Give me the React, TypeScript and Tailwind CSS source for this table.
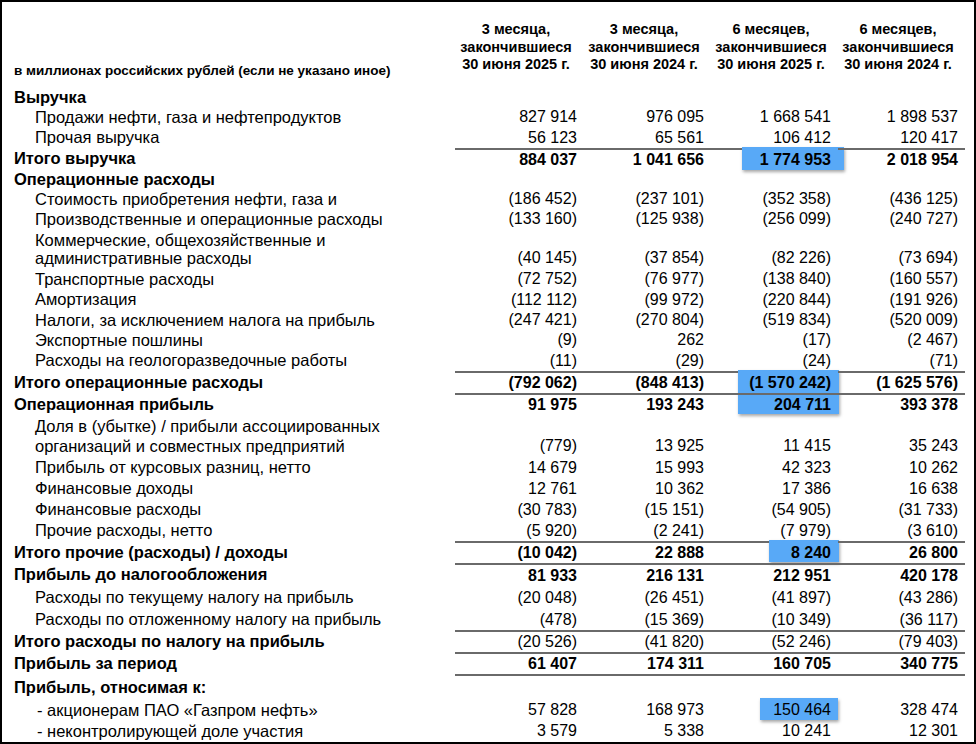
import React from "react";

interface Highlight {
  left: number;
  top: number;
  width: number;
  height: number;
}

interface Row {
  label: string[];
  values?: string[];
  kind: "head" | "item" | "total" | "boldLabel";
  h: number;
  line?: boolean;
  lead?: number;
  pad?: number;
  indent?: number;
  hl?: Highlight;
}

const rows: Row[] = [
  { label: ["Выручка"], kind: "head", h: 20 },
  { label: ["Продажи нефти, газа и нефтепродуктов"], values: ["827 914", "976 095", "1 668 541", "1 898 537"], kind: "item", h: 20 },
  { label: ["Прочая выручка"], values: ["56 123", "65 561", "106 412", "120 417"], kind: "item", h: 21 },
  {
    label: ["Итого выручка"], values: ["884 037", "1 041 656", "1 774 953", "2 018 954"], kind: "total", h: 21, line: true,
    hl: { left: 31, top: -1, width: 102, height: 23 },
  },
  { label: ["Операционные расходы"], kind: "head", h: 20 },
  { label: ["Стоимость приобретения нефти, газа и"], values: ["(186 452)", "(237 101)", "(352 358)", "(436 125)"], kind: "item", h: 20 },
  { label: ["Производственные и операционные расходы"], values: ["(133 160)", "(125 938)", "(256 099)", "(240 727)"], kind: "item", h: 20 },
  {
    label: ["Коммерческие, общехозяйственные и", "административные расходы"],
    values: ["(40 145)", "(37 854)", "(82 226)", "(73 694)"], kind: "item", h: 40, lead: 18, pad: 2,
  },
  { label: ["Транспортные расходы"], values: ["(72 752)", "(76 977)", "(138 840)", "(160 557)"], kind: "item", h: 20 },
  { label: ["Амортизация"], values: ["(112 112)", "(99 972)", "(220 844)", "(191 926)"], kind: "item", h: 21 },
  { label: ["Налоги, за исключением налога на прибыль"], values: ["(247 421)", "(270 804)", "(519 834)", "(520 009)"], kind: "item", h: 20 },
  { label: ["Экспортные пошлины"], values: ["(9)", "262", "(17)", "(2 467)"], kind: "item", h: 20 },
  { label: ["Расходы на геологоразведочные работы"], values: ["(11)", "(29)", "(24)", "(71)"], kind: "item", h: 21 },
  {
    label: ["Итого операционные расходы"], values: ["(792 062)", "(848 413)", "(1 570 242)", "(1 625 576)"], kind: "total", h: 22, line: true,
    hl: { left: 27, top: -1, width: 101, height: 44 },
  },
  { label: ["Операционная прибыль"], values: ["91 975", "193 243", "204 711", "393 378"], kind: "total", h: 22, line: true },
  {
    label: ["Доля в (убытке) / прибыли ассоциированных", "организаций и совместных предприятий"],
    values: ["(779)", "13 925", "11 415", "35 243"], kind: "item", h: 42, lead: 20, pad: 1,
  },
  { label: ["Прибыль от курсовых разниц, нетто"], values: ["14 679", "15 993", "42 323", "10 262"], kind: "item", h: 21 },
  { label: ["Финансовые доходы"], values: ["12 761", "10 362", "17 386", "16 638"], kind: "item", h: 21 },
  { label: ["Финансовые расходы"], values: ["(30 783)", "(15 151)", "(54 905)", "(31 733)"], kind: "item", h: 21 },
  { label: ["Прочие расходы, нетто"], values: ["(5 920)", "(2 241)", "(7 979)", "(3 610)"], kind: "item", h: 21 },
  {
    label: ["Итого прочие (расходы) / доходы"], values: ["(10 042)", "22 888", "8 240", "26 800"], kind: "total", h: 22, line: true,
    hl: { left: 58, top: -1, width: 70, height: 22 },
  },
  { label: ["Прибыль до налогообложения"], values: ["81 933", "216 131", "212 951", "420 178"], kind: "total", h: 23, line: true },
  { label: ["Расходы по текущему налогу на прибыль"], values: ["(20 048)", "(26 451)", "(41 897)", "(43 286)"], kind: "item", h: 23 },
  { label: ["Расходы по отложенному налогу на прибыль"], values: ["(478)", "(15 369)", "(10 349)", "(36 117)"], kind: "item", h: 21 },
  { label: ["Итого расходы по налогу на прибыль"], values: ["(20 526)", "(41 820)", "(52 246)", "(79 403)"], kind: "boldLabel", h: 22, line: true },
  { label: ["Прибыль за период"], values: ["61 407", "174 311", "160 705", "340 775"], kind: "total", h: 22, line: true },
  { label: ["Прибыль, относимая к:"], kind: "head", h: 26, line: true },
  {
    label: ["- акционерам ПАО «Газпром нефть»"], values: ["57 828", "168 973", "150 464", "328 474"], kind: "item", h: 20, indent: 35,
    hl: { left: 49, top: -2, width: 78, height: 22 },
  },
  { label: ["- неконтролирующей доле участия"], values: ["3 579", "5 338", "10 241", "12 301"], kind: "item", h: 22, indent: 35 },
];

const headers = [
  ["3 месяца,", "закончившиеся", "30 июня 2025 г."],
  ["3 месяца,", "закончившиеся", "30 июня 2024 г."],
  ["6 месяцев,", "закончившиеся", "30 июня 2025 г."],
  ["6 месяцев,", "закончившиеся", "30 июня 2024 г."],
];

const colWidths = ["w-[129px]", "w-[127px]", "w-[127px]", "w-[127px]"];

const ReportRow = ({ row }: { row: Row }) => {
  const boldLabel = row.kind !== "item";
  const boldNums = row.kind === "total";
  const lead = row.lead ?? row.h;
  const multi = row.label.length > 1;

  return (
    <div className="relative flex" style={{ height: row.h }}>
      <div
        className={`w-[453px] shrink-0 text-[16.5px] ${boldLabel ? "font-bold" : ""}`}
        style={{
          paddingLeft: row.indent ?? (row.kind === "item" ? 33 : 12),
          paddingTop: row.pad ?? 0,
          lineHeight: `${lead}px`,
        }}
      >
        {row.label.map((l) => (
          <div key={l} className="whitespace-nowrap">{l}</div>
        ))}
      </div>
      {[0, 1, 2, 3].map((i) => (
        <div
          key={i}
          className={`relative shrink-0 pr-[7px] text-right text-[16px] ${colWidths[i]} ${row.line ? "border-t-2 border-[#6a6a6a]" : ""} ${boldNums ? "font-bold" : ""}`}
          style={{
            paddingTop: multi ? (row.pad ?? 0) + lead * (row.label.length - 1) : 0,
            lineHeight: `${multi ? lead : row.h - (row.line ? 2 : 0)}px`,
          }}
        >
          {i === 2 && row.hl && (
            <div
              className="absolute bg-[#58a9f7] shadow-[1px_2px_3px_rgba(0,0,0,0.35)]"
              style={{ left: row.hl.left, top: row.hl.top - (row.line ? 2 : 0), width: row.hl.width, height: row.hl.height }}
            />
          )}
          {row.values && <span className="relative">{row.values[i]}</span>}
        </div>
      ))}
    </div>
  );
};

const App = () => {
  return (
    <div
      className="h-[744px] w-[976px] overflow-hidden border-2 border-black bg-white text-black"
      style={{ fontFamily: '"Liberation Sans", Arial, sans-serif' }}
    >
      {/* Шапка */}
      <div className="flex h-[85px] pt-[19px]">
        <div className="w-[453px] shrink-0 pl-3 pt-[42px] text-[13.5px] font-bold leading-4 whitespace-nowrap">
          в миллионах российских рублей (если не указано иное)
        </div>
        {headers.map((h, i) => (
          <div key={i} className={`shrink-0 pr-[7px] text-center text-[14.5px] font-bold leading-[17.5px] ${colWidths[i]}`}>
            {h.map((l) => (
              <div key={l} className="whitespace-nowrap">{l}</div>
            ))}
          </div>
        ))}
      </div>

      {/* Строки отчета */}
      {rows.map((row, idx) => (
        <ReportRow key={idx} row={row} />
      ))}
    </div>
  );
};

export default App;
